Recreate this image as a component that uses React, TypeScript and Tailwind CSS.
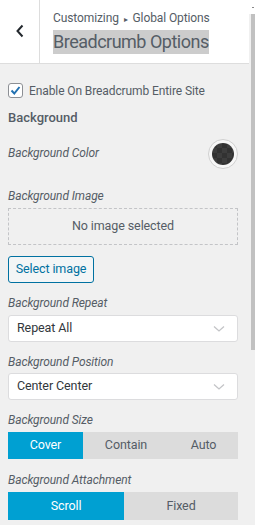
import React from "react";

const font = { fontFamily: 'Roboto, "Noto Sans", sans-serif' };

function Chevron() {
  return (
    <svg width="12" height="8" viewBox="0 0 12 8" className="shrink-0">
      <path d="M1 1.5 L6 6 L11 1.5" fill="none" stroke="#c3c4c7" strokeWidth="1.3" />
    </svg>
  );
}

function Label({ children, className = "" }: { children: React.ReactNode; className?: string }) {
  return <p className={`text-[12px] italic leading-[18px] tracking-[-0.1px] text-[#555d66] ${className}`}>{children}</p>;
}

function SelectBox({ value, className = "" }: { value: string; className?: string }) {
  return (
    <div
      className={`flex h-[27px] w-[230px] items-center justify-between rounded-[3px] border border-[#dcdcde] bg-white pl-[8px] pr-[12px] text-[12.5px] tracking-[-0.1px] text-[#32373c] ${className}`}
    >
      <span>{value}</span>
      <Chevron />
    </div>
  );
}

export default function App() {
  return (
    <div className="flex h-[525px] w-[255px] overflow-hidden bg-[#f0f0f0]" style={font}>
      <div className="flex w-[249px] flex-col">
        <div className="flex h-[64px] shrink-0 border-b border-[#dddddd] bg-white">
          <div className="flex w-[40px] items-center justify-center border-r border-[#dddddd] pb-[2px]">
            <svg width="10" height="14" viewBox="0 0 10 14">
              <path d="M7.5 1.5 L2.5 7 L7.5 12.5" fill="none" stroke="#23282d" strokeWidth="2" />
            </svg>
          </div>
          <div className="flex flex-col pl-[13px] pt-[10px]">
            <p className="text-[12px] leading-[16px] tracking-[-0.1px] text-[#555d66]">
              Customizing <span className="px-[2px] text-[8px]">▸</span> Global Options
            </p>
            <p className="mt-[2px] self-start bg-[#cccccc] text-[18px] leading-[24px] tracking-[-0.5px] text-[#555d66]">
              Breadcrumb Options
            </p>
          </div>
        </div>

        <div className="flex flex-col px-[8px]">
          <div className="mt-[19px] flex h-[15px] items-center gap-[6px]">
            <div className="flex h-[15px] w-[15px] items-center justify-center rounded-[3px] border border-[#8c8f94] bg-white">
              <svg width="13" height="13" viewBox="0 0 13 13">
                <path d="M2.5 6.5 L5.3 9.5 L10.5 3" fill="none" stroke="#2271b1" strokeWidth="2" />
              </svg>
            </div>
            <span className="text-[12px] leading-[18px] tracking-[-0.1px] text-[#555d66]">Enable On Breadcrumb Entire Site</span>
          </div>

          <p className="mt-[11px] text-[13px] font-medium leading-[18px] text-[#555d66]">Background</p>

          <div className="mt-[12px] flex h-[30px] w-[230px] items-center justify-between">
            <Label className="-mt-[3px]">Background Color</Label>
            <div className="flex h-[30px] w-[30px] items-center justify-center rounded-full border border-[#d0d0d0] bg-[#f7f7f7]">
              <div
                className="h-[22px] w-[22px] rounded-full"
                style={{
                  backgroundColor: "#323232",
                  backgroundImage:
                    "linear-gradient(45deg,#3d3d3d 25%,transparent 25%,transparent 75%,#3d3d3d 75%),linear-gradient(45deg,#3d3d3d 25%,transparent 25%,transparent 75%,#3d3d3d 75%)",
                  backgroundSize: "10px 10px",
                  backgroundPosition: "0 0,5px 5px",
                }}
              />
            </div>
          </div>

          <Label className="mt-[18px]">Background Image</Label>
          <div className="mt-[3px] flex h-[37px] w-[230px] items-center justify-center border border-dashed border-[#c3c4c7] text-[12.5px] tracking-[-0.1px] text-[#555d66]">
            No image selected
          </div>
          <div className="mt-[11px]">
            <div className="inline-flex h-[27px] w-[86px] items-center justify-center rounded-[3px] border border-[#0071a1] bg-[#f3f5f6] text-[12.5px] tracking-[-0.1px] text-[#0071a1]">
              Select image
            </div>
          </div>

          <Label className="mt-[11px]">Background Repeat</Label>
          <SelectBox value="Repeat All" className="mt-[3px]" />

          <Label className="mt-[11px]">Background Position</Label>
          <SelectBox value="Center Center" className="mt-[2px]" />

          <Label className="mt-[11px]">Background Size</Label>
          <div className="mt-[3px] flex h-[27px] w-[230px] text-[12.5px] tracking-[-0.1px]">
            <div className="flex w-[75px] items-center justify-center bg-[#00a0d2] text-white">Cover</div>
            <div className="flex w-[86px] items-center justify-center bg-[#dcdcdc] text-[#555d66]">Contain</div>
            <div className="flex flex-1 items-center justify-center bg-[#dcdcdc] text-[#555d66]">Auto</div>
          </div>

          <Label className="mt-[12px]">Background Attachment</Label>
          <div className="mt-[3px] flex h-[28px] w-[230px] text-[12.5px] tracking-[-0.1px]">
            <div className="flex w-[116px] items-center justify-center bg-[#00a0d2] text-white">Scroll</div>
            <div className="flex flex-1 items-center justify-center bg-[#dcdcdc] text-[#555d66]">Fixed</div>
          </div>
        </div>
      </div>

      <div className="flex w-[6px] flex-col bg-[#f0f0f0]">
        <div className="flex h-[14px] items-center justify-end bg-white pr-[1px]">
          <div className="h-[1px] w-[2px] bg-[#888]" />
        </div>
        <div className="ml-[2px] h-[336px] bg-[#c1c1c1]" />
      </div>
    </div>
  );
}
